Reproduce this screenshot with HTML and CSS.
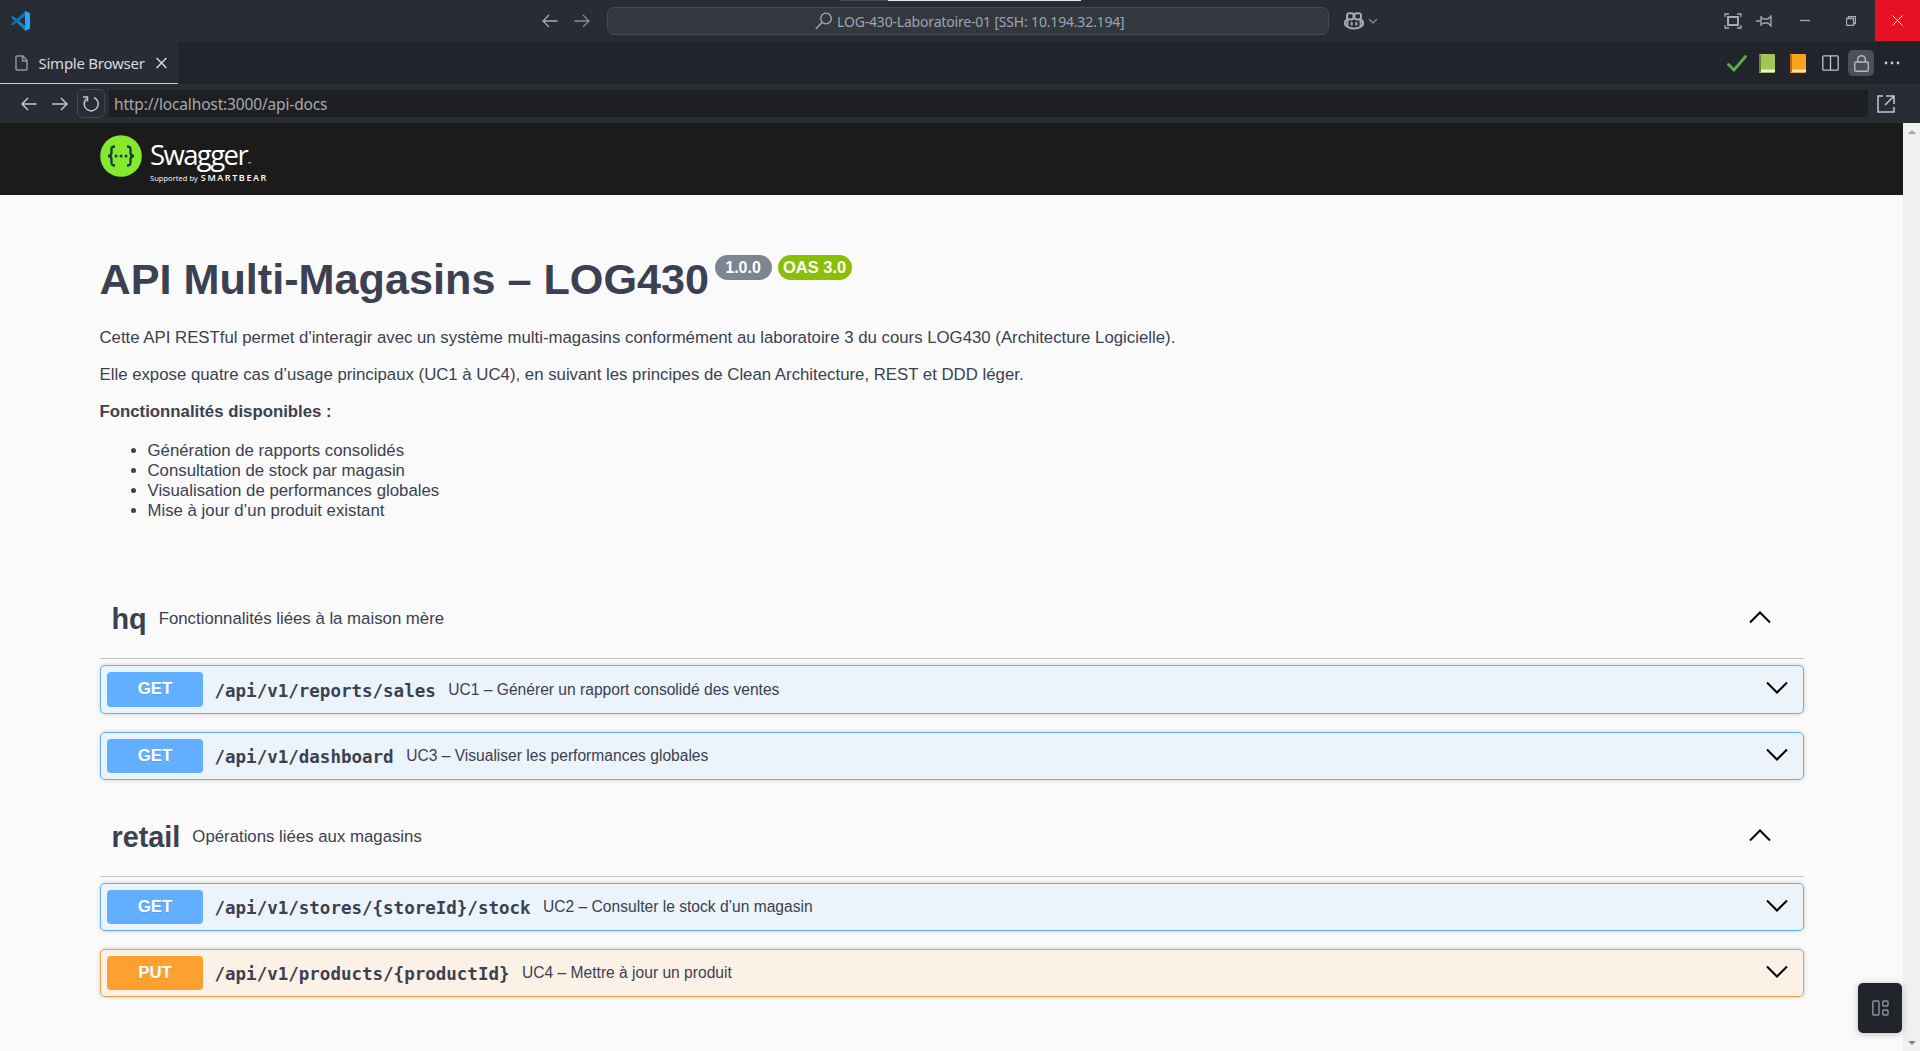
FILE: index.html
```html
<!DOCTYPE html>
<html lang="fr">
<head>
<meta charset="utf-8">
<title>Simple Browser</title>
<link rel="stylesheet" href="styles.css">
</head>
<body>
<div class="window">
  <header class="titlebar">
    <svg class="vscode" width="20" height="20" viewBox="0 0 20 20"><path d="M0 6.3 1.6 5 14.5 15v4.8Z" fill="#1483c9"/><path d="M0 13.2 1.6 14.5 14.5 5V0Z" fill="#0d72b4"/><path d="M14 0 19 2.2v15.6L14 20V0Z" fill="#27a5ee"/></svg>
    <div class="history">
      <svg width="16" height="14" viewBox="0 0 16 14" class="line"><path d="M15.5 7H1M7 1 1 7l6 6"/></svg>
      <svg width="16" height="14" viewBox="0 0 16 14" class="line dim"><path d="M.5 7H15M9 1l6 6-6 6"/></svg>
    </div>
    <div class="command">
      <svg width="18" height="18" viewBox="0 0 18 18" class="line"><circle cx="11" cy="6.5" r="5.3"/><path d="M7.2 10.3.8 17"/></svg>
      <span class="command-text">LOG-430-Laboratoire-01 [SSH: 10.194.32.194]</span>
      <i class="progress"></i>
    </div>
    <div class="copilot">
      <svg width="20" height="18" viewBox="0 0 20 18" fill="none" stroke="#a5abb6" stroke-width="2"><rect x="3" y="1.2" width="6.6" height="6.3" rx="2.4"/><rect x="10.4" y="1.2" width="6.6" height="6.3" rx="2.4"/><path d="M3 7.5C1.5 8.300 1 9 1 10.500v1.500c0 2.200 5 4.500 9 4.500s9-2.300 9-4.500v-1.500c0-1.500-.5-2.200-2-3M3.500 8v5.500M16.500 8v5.500M7.700 10v3.500M12.300 10v3.500"/></svg>
      <svg width="10" height="6" viewBox="0 0 10 6" class="line dim"><path d="M1 1l4 4 4-4"/></svg>
    </div>
    <div class="controls">
      <svg width="18" height="16" viewBox="0 0 18 16" class="line"><path d="M1 4V1h4M13 1h4v3M17 12v3h-4M5 15H1v-3"/><rect x="4" y="4" width="10" height="8" stroke-width="2"/></svg>
      <svg width="16" height="12" viewBox="0 0 16 12" class="line pin"><path d="M0 6h5M5 1v10M5 2.500 8 4h4l3-3v10l-3-3H8L5 9.500"/></svg>
      <svg width="10" height="10" viewBox="0 0 10 10" class="line minimize"><path d="M0 4.500h10"/></svg>
      <svg width="10" height="10" viewBox="0 0 10 10" class="line restore"><path d="M.5 2.500h7v7h-7ZM2.500 2.500v-2h7v7h-2"/></svg>
      <div class="close"><svg width="11" height="11" viewBox="0 0 11 11"><path d="M.5.5l10 10M10.500.5l-10 10" stroke="#fff" fill="none"/></svg></div>
    </div>
  </header>

  <nav class="tabs">
    <div class="tab">
      <svg width="13" height="16" viewBox="0 0 13 16" fill="none" stroke="#8a949d" stroke-width="1.500"><path d="M1 2Q1 1 2 1h6l4 4.500V14q0 1-1 1H2q-1 0-1-1ZM7.500 1v5H12"/></svg>
      <span class="tab-label">Simple Browser</span>
      <svg width="11" height="12" viewBox="0 0 11 12" fill="none" stroke="#d4d6d9" stroke-width="1.500"><path d="M.6 1l9.800 10M10.400 1 .6 11"/></svg>
    </div>
    <div class="actions">
      <svg class="check" width="20" height="17" viewBox="0 0 20 17"><path d="M1.500 9.500 7 15 18.500 1.500" fill="none" stroke="#58b045" stroke-width="2.800" stroke-linecap="round"/></svg>
      <svg class="book" width="16" height="19" viewBox="0 0 16 19"><rect width="16" height="19" rx="1" fill="#a5c455"/><path d="M0 1h2v17H0Z" fill="#648b32"/><path d="M2 15.500h14v2.500H2Z" fill="#eef2df"/></svg>
      <svg class="book" width="16" height="19" viewBox="0 0 16 19"><rect width="16" height="19" rx="1" fill="#f9a51b"/><path d="M0 1h2v17H0Z" fill="#b86b14"/><path d="M2 15.500h14v2.500H2Z" fill="#f7e8cb"/></svg>
      <svg class="split" width="17" height="16" viewBox="0 0 17 16" fill="none" stroke="#bfc3ca" stroke-width="1.300"><rect x=".8" y=".8" width="15.400" height="14.400" rx="1"/><path d="M8.500 1v14"/></svg>
      <span class="lock"><svg width="15" height="17" viewBox="0 0 15 17" fill="none" stroke="#b5b8be" stroke-width="1.400"><rect x=".7" y="7" width="13.600" height="9.300" rx="1.500"/><path d="M3.700 7V4.500a3.800 3.800 0 0 1 7.600 0V7"/></svg></span>
      <svg class="more" width="16" height="4" viewBox="0 0 16 4" fill="#c5c8cd"><circle cx="2" cy="2" r="1.400"/><circle cx="8" cy="2" r="1.400"/><circle cx="14" cy="2" r="1.400"/></svg>
    </div>
  </nav>

  <div class="addressbar">
    <svg width="16" height="14" viewBox="0 0 16 14" class="nav-icon"><path d="M15.500 7H1M7 1 1 7l6 6"/></svg>
    <svg width="16" height="14" viewBox="0 0 16 14" class="nav-icon"><path d="M0 7h15M9 1l6 6-6 6"/></svg>
    <span class="reload"><svg width="16" height="16" viewBox="0 0 16 16" class="nav-icon"><path d="M11 1.500A7 7 0 1 1 3.500 2.700M0 1h4.500v4.500"/></svg></span>
    <div class="url"><span class="url-text">http://localhost:3000/api-docs</span></div>
    <svg class="nav-icon" width="18" height="18" viewBox="0 0 18 18"><path d="M6 1H1v16h16v-5M9 1h8v8M16.500 1.500 8 10"/></svg>
  </div>

  <div class="viewport">
    <main class="page">
      <div class="topbar">
        <svg width="42" height="42" viewBox="0 0 42 42"><circle cx="21" cy="21" r="20.800" fill="#85ea2d"/><g fill="none" stroke="#173647" stroke-width="2.300"><path d="M15 11.500c-3 0-3.500 1-3.500 3v3c0 2-.8 3.500-3.500 3.500 2.700 0 3.500 1.500 3.500 3.500v3c0 2 .5 3 3.500 3M27 11.500c3 0 3.500 1 3.500 3v3c0 2 .8 3.500 3.500 3.500-2.700 0-3.500 1.500-3.500 3.500v3c0 2-.5 3-3.500 3"/></g><g fill="#173647"><circle cx="16" cy="21" r="1.500"/><circle cx="21" cy="21" r="1.500"/><circle cx="26" cy="21" r="1.500"/></g></svg>
        <div class="brand">
          <div class="brand-name">Swagger<small>™</small></div>
          <div class="brand-sub">Supported by <b>SMARTBEAR</b></div>
        </div>
      </div>

      <section class="info">
        <div class="heading"><h1>API Multi-Magasins – LOG430</h1><span class="version">1.0.0</span><span class="oas">OAS 3.0</span></div>
        <p>Cette API RESTful permet d'interagir avec un système multi-magasins conformément au laboratoire 3 du cours LOG430 (Architecture Logicielle).</p>
        <p>Elle expose quatre cas d’usage principaux (UC1 à UC4), en suivant les principes de Clean Architecture, REST et DDD léger.</p>
        <p><strong>Fonctionnalités disponibles :</strong></p>
        <ul>
          <li>Génération de rapports consolidés</li>
          <li>Consultation de stock par magasin</li>
          <li>Visualisation de performances globales</li>
          <li>Mise à jour d’un produit existant</li>
        </ul>
      </section>

      <section class="group hq">
        <div class="group-head"><h2>hq</h2><span>Fonctionnalités liées à la maison mère</span><svg width="22" height="13" viewBox="0 0 22 13" class="chevron"><path d="M1 11.500 11 1.500l10 10"/></svg></div>
        <div class="op get"><b class="method">GET</b><code>/api/v1/reports/sales</code><span class="summary">UC1 – Générer un rapport consolidé des ventes</span><svg width="22" height="13" viewBox="0 0 22 13" class="chevron"><path d="M1 1.500l10 10 10-10"/></svg></div>
        <div class="op get"><b class="method">GET</b><code>/api/v1/dashboard</code><span class="summary">UC3 – Visualiser les performances globales</span><svg width="22" height="13" viewBox="0 0 22 13" class="chevron"><path d="M1 1.500l10 10 10-10"/></svg></div>
      </section>
      <section class="group retail">
        <div class="group-head"><h2>retail</h2><span>Opérations liées aux magasins</span><svg width="22" height="13" viewBox="0 0 22 13" class="chevron"><path d="M1 11.500 11 1.500l10 10"/></svg></div>
        <div class="op get"><b class="method">GET</b><code>/api/v1/stores/{storeId}/stock</code><span class="summary">UC2 – Consulter le stock d’un magasin</span><svg width="22" height="13" viewBox="0 0 22 13" class="chevron"><path d="M1 1.500l10 10 10-10"/></svg></div>
        <div class="op put"><b class="method">PUT</b><code>/api/v1/products/{productId}</code><span class="summary">UC4 – Mettre à jour un produit</span><svg width="22" height="13" viewBox="0 0 22 13" class="chevron"><path d="M1 1.500l10 10 10-10"/></svg></div>
      </section>
    </main>
    <div class="scrollbar"><i class="up"></i><i class="down"></i></div>
    <div class="floating"><svg width="17" height="16" viewBox="0 0 17 16" fill="none" stroke="#8d929b" stroke-width="1.400"><rect x=".8" y="1" width="6.200" height="14" rx="1.200"/><rect x="10.800" y="1" width="5.200" height="5" rx="1"/><rect x="10.800" y="10" width="5.200" height="5" rx="1"/></svg></div>
  </div>
</div>
</body>
</html>
```
FILE: styles.css
```css
* { box-sizing: border-box; }
body { margin: 0; background: #fafafa; color: #3b4151; font-family: "Liberation Sans", Arial, sans-serif; overflow: hidden; }
svg { display: block; flex: none; }
.window { display: flex; flex-direction: column; width: 1920px; height: 1051px; font-size: 16.8px; white-space: nowrap; }

.titlebar { display: flex; align-items: center; height: 42px; background: #282c34; padding-left: 11px; font-family: "Noto Sans", sans-serif; }
.line { fill: none; stroke: #a5abb6; stroke-width: 1.300; }
.dim { opacity: .75; }
.history { display: flex; gap: 16px; margin-left: 511px; }
.command { position: relative; display: flex; align-items: center; gap: 4px; width: 722px; height: 28px; margin-left: 17px; padding-left: 207px; background: #33373e; border: 1px solid #474b54; border-radius: 7px; color: #9da5b4; }
.command-text { font-size: 14px; letter-spacing: -.18px; }
.progress { position: absolute; left: 232px; top: -8px; width: 241px; height: 1px; background: linear-gradient(90deg, #444b4d 48px, #e4e9e9 48px); }
.copilot { display: flex; align-items: center; gap: 4px; margin-left: 15px; }
.controls { display: flex; align-items: center; align-self: stretch; margin-left: auto; }
.pin { margin-left: 14px; }
.minimize { margin-left: 28px; }
.restore { margin-left: 36px; }
.close { display: flex; align-items: center; justify-content: center; width: 45px; height: 41px; margin-left: 19px; align-self: flex-start; background: #e81123; }

.tabs { display: flex; justify-content: space-between; height: 42px; background: #21252b; font-family: "Noto Sans", sans-serif; }
.tab { display: flex; align-items: center; width: 178px; padding-left: 15px; background: #282c34; border-bottom: 1px solid #c9cbce; color: #d7dae0; }
.tab-label { width: 106px; margin: 0 11px 0 10.500px; font-size: 15px; letter-spacing: -.25px; }
.actions { display: flex; align-items: center; padding-right: 20px; }
.book { margin-left: 12px; }
.book + .book { margin-left: 15px; }
.split { margin-left: 16px; }
.lock { display: flex; align-items: center; justify-content: center; width: 26px; height: 26px; margin: 0 10px 0 9px; border-radius: 5px; background: #4c505a; }

.addressbar { display: flex; align-items: center; height: 39px; padding: 0 25px 0 21px; background: #282c34; font-family: "Noto Sans", sans-serif; }
.nav-icon { fill: none; stroke: #c3c6cb; stroke-width: 1.500; }
.nav-icon + .nav-icon { margin-left: 15px; }
.reload { display: flex; align-items: center; justify-content: center; width: 28px; height: 29px; margin: 0 4px 0 9px; border: 1px solid #454952; border-radius: 6px; }
.url { display: flex; align-items: center; flex: 1; height: 27px; margin-right: 9px; padding-left: 5px; background: #1d1f23; color: #a5a8ae; }
.url-text { font-size: 15.500px; letter-spacing: -.15px; }

.viewport { position: relative; display: flex; flex: 1; }
.page { width: 1903px; background: #fafafa; }
.topbar { display: flex; height: 72px; padding: 12px 0 0 100px; gap: 8px; background: #1b1b1b; color: #fff; font-family: "Open Sans", sans-serif; }
.brand-name { height: 42px; font-size: 27.500px; line-height: 40px; letter-spacing: -1.600px; }
.brand-name small { margin-left: 1px; font-size: 4px; letter-spacing: 0; }
.brand-sub { margin-top: -6px; font: 7.500px/14px "Open Sans", sans-serif; letter-spacing: .05px; }
.brand-sub b { margin-left: 1px; font-size: 9px; font-weight: 600; letter-spacing: 1.600px; }

.info { height: 382px; padding: 59px 0 0 99.500px; }
.heading { display: flex; align-items: flex-start; height: 72px; }
h1 { margin: 0 5.500px 0 0; font-size: 43.200px; line-height: 50px; }
.version, .oas { height: 25px; margin-top: 1px; border-radius: 13px; background: #7d8492; color: #fff; font-size: 16px; font-weight: 700; line-height: 25px; text-align: center; }
.version { width: 57px; }
.oas { width: 74px; margin-left: 6px; background: #89bf04; font-size: 16.500px; }
p { height: 20px; margin: 0 0 17px; line-height: 20px; }
p:first-of-type { margin-top: 2px; }
ul { margin: 19px 0 0; padding-left: 48px; line-height: 20px; }

.group { width: 1704px; margin-left: 100px; }
.hq { height: 218px; }
.group-head { display: flex; align-items: center; height: 82px; margin-bottom: 6px; padding: 3px 33px 0 11.500px; border-bottom: 1px solid #c3c4ca; }
.group-head .chevron { margin-top: -3px; }
h2 { margin: 0 12px 0 0; font-size: 28.800px; }
.chevron { margin-left: auto; fill: none; stroke: #000; stroke-width: 2; }
.op { display: flex; align-items: center; height: 48px; margin-bottom: 18px; padding: 0 15px 0 6px; border: 1px solid #61affe; border-radius: 5px; background: #ebf3fb; box-shadow: 0 0 4px rgba(0,0,0,.19); }
.hq .group-head + .op { height: 49px; }
.op .chevron { margin-top: -4px; }
.method { width: 96px; height: 34px; border-radius: 4px; background: #61affe; color: #fff; font-size: 16.800px; line-height: 33px; text-align: center; text-shadow: 0 1px rgba(0,0,0,.1); }
.hq .group-head + .op .method { height: 35px; line-height: 34px; }
.put { border-color: #f0a04a; background: #fbf1e6; }
.put .method { background: #fca130; }
code { margin: 2px 12.500px 0 11.500px; font: 700 17.500px "DejaVu Sans Mono", monospace; }
.summary { font-size: 15.600px; }

.scrollbar { display: flex; flex-direction: column; align-items: center; justify-content: space-between; width: 17px; padding: 7px 0 6px; background: #f0f0f0; }
.up, .down { border: 4px solid transparent; }
.up { border-top: 0; border-bottom-color: #a3a3a3; }
.down { border-bottom: 0; border-top-color: #888; }
.floating { position: absolute; right: 18px; bottom: 18px; display: flex; align-items: center; justify-content: center; width: 44px; height: 50px; border-radius: 5px; background: #21252b; box-shadow: 0 1px 7px rgba(0,0,0,.25); }
```
